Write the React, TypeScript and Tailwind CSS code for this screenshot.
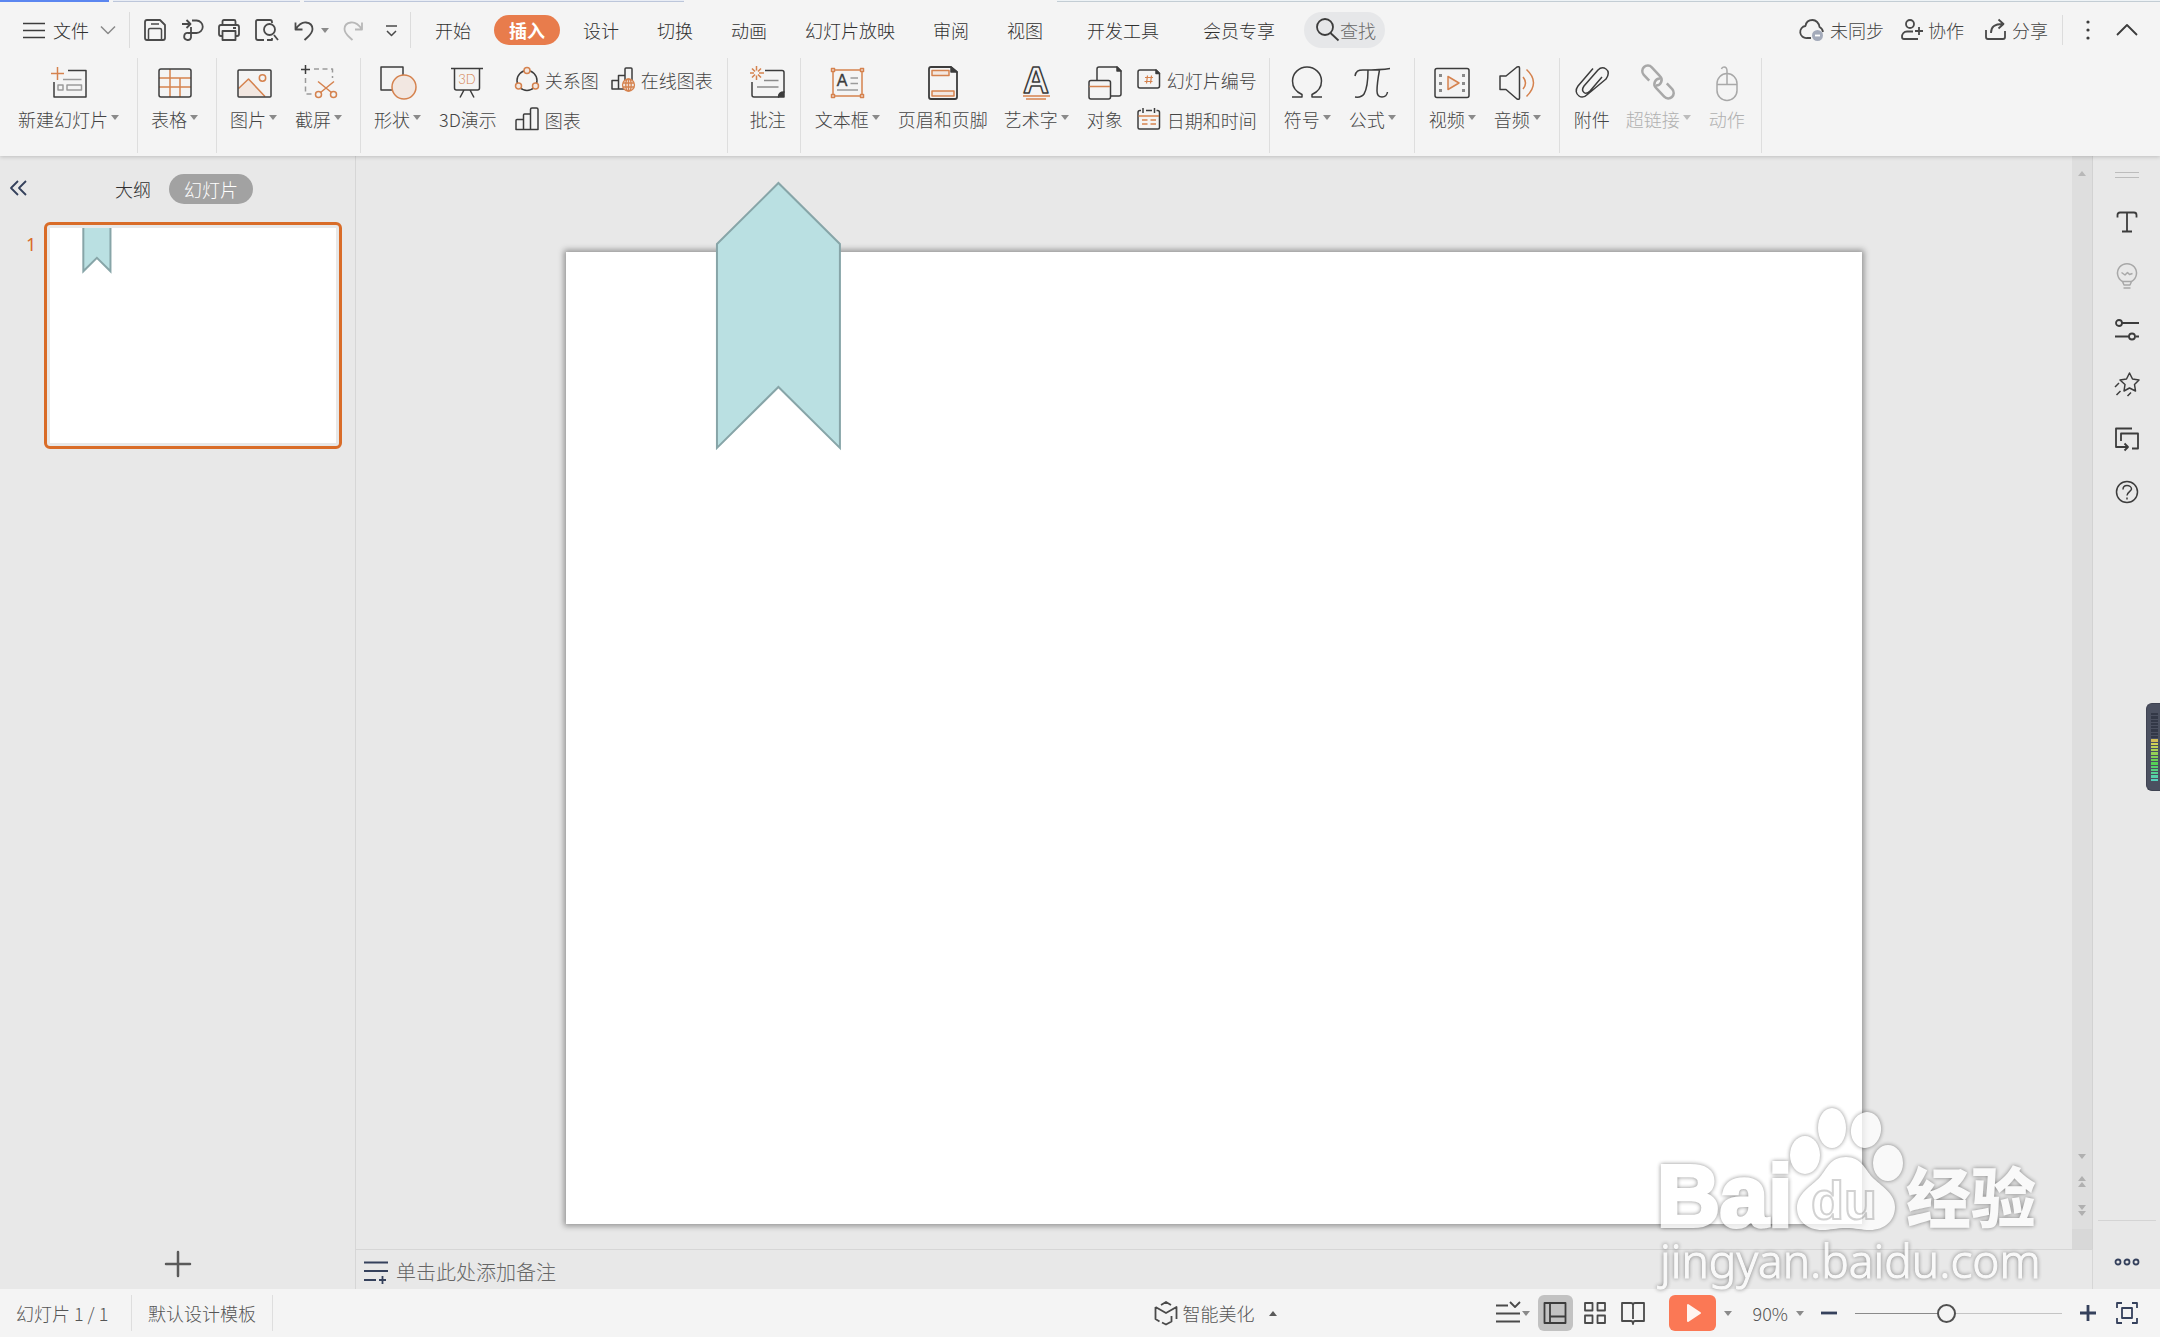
import React, { useState } from 'react';

const INK = '#3c3c3c';
const ORANGE = '#d5824e';
const TINT = '#f2e7e1';
const NAVY = '#35415c';

interface IconProps { children: React.ReactNode; size?: number; stroke?: string; width?: number; }

function Icon({ children, size = 36, stroke = INK, width = 1.5 }: IconProps) {
  return (
    <svg width={size} height={size} viewBox={`0 0 ${size} ${size}`} fill="none" stroke={stroke} strokeWidth={width} strokeLinejoin="round" className="shrink-0 overflow-visible" aria-hidden="true">
      {children}
    </svg>
  );
}

function Caret({ up = false, className = 'text-[#8a8a8a]' }: { up?: boolean; className?: string }) {
  return (
    <svg width="8" height="5" viewBox="0 0 8 5" fill="currentColor" className={`shrink-0 ${className}`} aria-hidden="true">
      <path d={up ? 'M0 5h8L4 0z' : 'M0 0h8L4 5z'} />
    </svg>
  );
}

const icons = {
  newSlide: <Icon><path d="M17 5.5h18V32H3V17" /><path d="M12 14.5h18.500M7 20h5v5H7zM16 20h14.500v5H16z" stroke="#9a9a9a" /><path d="M6.500 2v13M0 8.500h13" stroke={ORANGE} /></Icon>,
  table: <Icon><path d="M2 13h32M2 22h32M13 4v28M23 13v19" stroke={ORANGE} /><rect x="2" y="4" width="32" height="28" rx="2" /></Icon>,
  picture: <Icon><path d="M2.500 23.500l10-9.500L29 31.500H2.500z" fill={TINT} stroke="none" /><path d="M2.500 23.500l10-9.500L29 31.500" stroke={ORANGE} /><circle cx="26.500" cy="13" r="3.200" stroke={ORANGE} /><rect x="2" y="5" width="33" height="27" rx="1" /></Icon>,
  screenshot: <Icon><path d="M13 4h18.500v9M4.500 13v16H14" stroke="#9a9a9a" strokeDasharray="5 3.500" /><path d="M4.500 0v9M0 4.500h9" /><g stroke={ORANGE}><circle cx="17.500" cy="29.500" r="3" /><circle cx="32.500" cy="29.500" r="3" /><path d="M17 16.500l13.500 11M33 16.500l-13.500 11" /></g></Icon>,
  shapes: <Icon><rect x="1" y="2" width="22" height="23" /><circle cx="24" cy="22" r="12" fill={TINT} stroke={ORANGE} /></Icon>,
  threeD: <Icon><path d="M1 3.500h32M4.500 3.500V23q0 2 2 2h21q2 0 2-2V3.500M14 25l-4 7.500M20 25l4 7.500" /><text x="17" y="19" textAnchor="middle" fill={ORANGE} stroke="none" fontSize="13" fontFamily="Lato, sans-serif">3D</text></Icon>,
  comment: <Icon><path d="M15 5.500h17q2 0 2 2V27l-5.500 5H4q-2 0-2-2V17" /><path d="M34 27v5h-5.500q0-5 5.500-5z" fill={INK} /><path d="M14 15.500h14.500M7 22h21.500" stroke="#8a8a8a" /><path d="M6.500 1v4.500M6.500 10.500V15M0 8h4M9 8h5M2 3.500l3 3M11 3.500l-3 3M2 12.500l3-3M11 12.500l-3-3" stroke={ORANGE} /></Icon>,
  textBox: <Icon stroke={ORANGE}><rect x="4" y="5" width="29" height="26" /><path d="M2.500 3.500h3v3h-3zM31.500 3.500h3v3h-3zM2.500 29.500h3v3h-3zM31.500 29.500h3v3h-3z" fill={TINT} /><path d="M21.500 13H29M21.500 18.500H29M8 25h21" stroke="#9a9a9a" /><text x="13" y="21" textAnchor="middle" fill={INK} stroke={INK} strokeWidth="0.400" fontSize="16" fontFamily="Liberation Sans, sans-serif">A</text></Icon>,
  headerFooter: <Icon><path d="M26 2H6Q4 2 4 4v28q0 2 2 2h24q2 0 2-2V7z" strokeWidth="1.800" /><path d="M26 2v5h6z" fill={INK} /><path d="M7 5.500h17v5H7zM7 26h22v5H7z" fill={TINT} stroke={ORANGE} /></Icon>,
  wordArt: <Icon><text x="18" y="27.500" textAnchor="middle" fontSize="36" fontWeight="700" fontFamily="Liberation Sans, sans-serif">A</text><path d="M5 31h27M8 34h20" stroke={ORANGE} /></Icon>,
  object: <Icon><path d="M30 2H12q-2 0-2 2v27h22q2 0 2-2V6z" /><path d="M30 2v4h4z" fill={INK} /><rect x="2" y="15.500" width="21.500" height="18.500" rx="2" fill="#f4f4f4" /><path d="M2.500 21.500h20.500" stroke={ORANGE} /></Icon>,
  omega: <Icon><path d="M3 32h10v-2.500C7.500 27 3.500 22 3.500 16a14.500 14 0 0 1 29 0c0 6-4 11-9.500 13.500V32h10" /></Icon>,
  pi: <Icon><path d="M1 11C2 6 4 5 9 5c9 0 18 0 27-1.500M14 5c0 10-1 19-4 24-2 3-5 3.500-9 3M25.500 5C24 13 23 19 23 26c0 4 1.500 6 5 6 3.500 0 5-2 5.500-5" /></Icon>,
  video: <Icon><rect x="1" y="3.500" width="34" height="29" rx="2" /><path d="M6.500 9v3M6.500 17v3M6.500 24v3M29.500 9v3M29.500 17v3M29.500 24v3" stroke="#8a8a8a" strokeWidth="3" /><path d="M14 11.500v13l11-6.500z" fill={TINT} stroke={ORANGE} /></Icon>,
  audio: <Icon><path d="M1 11h6L18 2q2.500-1 2.500 1v30q0 2-2.500 1L7 24.500H1z" /><path d="M24 12q5 6 0 12M27.500 4.500q14 13 0 27" stroke={ORANGE} /></Icon>,
  attach: <Icon><path d="M19 3.500L4 21c-3 4-2 8 1 10s6 1 9-2L32 14c3-4 3-8 0-10s-6-1-8 1L10 21c-2 3-2 5 0 6.500s4 .5 6-1.500l12-14" /></Icon>,
  link: <Icon stroke="#a8a8a8" width={2.500}><g transform="translate(18 17) rotate(47)"><path d="M-7 5.500H-15a5.500 5.500 0 0 1 0-11H-3a5.500 5.500 0 0 1 4 9.500" /><path d="M7-5.500H15a5.500 5.500 0 0 1 0 11H3a5.500 5.500 0 0 1-4-9.500" /></g></Icon>,
  mouse: <Icon stroke="#a8a8a8"><rect x="8" y="8.500" width="20" height="27" rx="10" /><path d="M8 19.500h20M18 19.500V6q0-4-3-4-2 0-2.500 2" /></Icon>,
  relation: <Icon size={24}><circle cx="12" cy="12.500" r="10" /><g fill={TINT} stroke={ORANGE}><circle cx="12" cy="2.500" r="3" /><circle cx="3.500" cy="18" r="3" /><circle cx="20.500" cy="18" r="3" /></g></Icon>,
  chart: <Icon size={24}><path d="M1 21.500v-9q0-1 1-1h6.500v10zM8.500 21.500V7q0-1 1-1h6v15.500zM15.500 21.500V1.500q0-1.500 1.500-1.500h4.500Q23 0 23 1.500v20z" /></Icon>,
  onlineChart: <Icon size={24}><path d="M1 21v-8.500h6.500V21zM7.500 21V7.500H14V21zM14 12V1q0-1 1-1h5q1 0 1 1v12" /><g stroke={ORANGE} strokeWidth="1.300"><circle cx="17.500" cy="17" r="6" fill={TINT} /><ellipse cx="17.500" cy="17" rx="2.700" ry="6" /><path d="M12 15h11M12 19h11M17.500 11v12" /></g></Icon>,
  slideNumber: <Icon size={24}><path d="M19 2H3Q1 2 1 4v14q0 2 2 2h17.500q2 0 2-2V5.500z" /><path d="M19 2v3.500h3.500z" fill={INK} /><path d="M8 9.500h8M7.500 13.500h8M10.500 7.500l-1 8M14.500 7.500l-1 8" stroke={ORANGE} strokeWidth="1.200" /></Icon>,
  dateTime: <Icon size={24}><path d="M4 2.500H3Q1 2.500 1 4.500v15q0 1.500 1.500 1.500h18.500q1.500 0 1.500-1.500v-15q0-2-2-2h-1M9 2.500h6M6 0v5M17.500 0v5" /><path d="M1.500 8H22M5 12h5.500M13.500 12H19M5 16h5.500M13.500 16H19" stroke={ORANGE} /></Icon>,
};

type IconName = keyof typeof icons;

function RibbonGroup({ children, className = 'pl-[5px] pr-2' }: { children: React.ReactNode; className?: string }) {
  return <div className={`flex h-[95px] items-start border-r border-[#dedede] ${className}`}>{children}</div>;
}

function RibbonButton({ icon, label, menu, disabled }: { icon: IconName; label: string; menu?: boolean; disabled?: boolean }) {
  return (
    <button disabled={disabled} className={`flex shrink-0 flex-col items-center gap-[7px] pt-[7px] pl-2 ${menu ? 'pr-[10px]' : 'pr-2'} ${disabled ? 'text-[#b0b0b0]' : 'text-[#444]'}`}>
      {icons[icon]}
      <span className="flex items-center gap-[3px] whitespace-nowrap leading-[22px]">
        {label}
        {menu && <Caret className={disabled ? 'mb-1 text-[#bcbcbc]' : 'mb-1 text-[#8a8a8a]'} />}
      </span>
    </button>
  );
}

function SmallButton({ icon, label }: { icon: IconName; label: string }) {
  return (
    <button className="flex h-10 items-center gap-[6px] whitespace-nowrap text-[#444]">
      {icons[icon]}
      {label}
    </button>
  );
}

const TABS = ['开始', '插入', '设计', '切换', '动画', '幻灯片放映', '审阅', '视图', '开发工具', '会员专享'];

function TabRow() {
  const [active, setActive] = useState('插入');
  return (
    <div className="flex h-14 items-center justify-between text-[#303030]">
      <div className="flex items-center">
        <button className="flex items-center pl-[23px] pr-[14px]">
          <Icon size={22}><path d="M0 4.500h22M0 11.500h22M0 18.500h22" /></Icon>
          <span className="ml-2 whitespace-nowrap">文件</span>
          <span className="ml-3"><Icon size={14} stroke="#8a8a8a"><path d="M0 3.500l7 7 7-7" /></Icon></span>
        </button>
        <div className="flex h-9 items-center gap-[13px] border-x border-[#dcdcdc] pl-[13px] pr-[9px]">
          <button aria-label="保存">
            <Icon size={24} width={1.800} stroke="#4a4a4a"><path d="M4 2h13l5 5v13q0 2-2 2H4q-2 0-2-2V4q0-2 2-2z" /><path d="M8 6h8M5.500 22V12q0-1.500 1.500-1.500h10q1.500 0 1.500 1.500v10" strokeWidth="1.500" /></Icon>
          </button>
          <button aria-label="输出为PDF">
            <Icon size={24} stroke="#4a4a4a" width={1.800}><path d="M2 6h8M6.500 2l4 4-4 4M12 2.500h4.500a6 6 0 0 1 0 12.500H8a3.500 3.500 0 1 0 3 4.500V9" /></Icon>
          </button>
          <button aria-label="打印">
            <Icon size={24} stroke="#4a4a4a" width={1.800}><path d="M5.500 7V3.500Q5.500 2 7 2h10q1.500 0 1.500 1.500V7M5.500 18H4q-2 0-2-2V9q0-2 2-2h16q2 0 2 2v7q0 2-2 2h-1.500M5.500 13h13v9h-13zM16 10h3" /></Icon>
          </button>
          <button aria-label="打印预览">
            <Icon size={24} stroke="#4a4a4a" width={1.800}><path d="M10 22H4q-2 0-2-2V3.500Q2 2 3.500 2H16q2 0 2 2v1M18 20v2h-5M20 17l4 5" /><circle cx="15.500" cy="11.500" r="5.500" /></Icon>
          </button>
          <button aria-label="撤消" className="flex items-center gap-[6px]">
            <Icon size={24} stroke="#4a4a4a" width={1.800}><path d="M4.500 4.500v7h7M4.500 11.500C7.500 7 11 4 15 4.500c4 .5 6.500 3 6.500 6.500 0 5-4 7-8 11" /></Icon>
            <Caret />
          </button>
          <button aria-label="恢复" disabled>
            <Icon size={24} stroke="#b8b8b8" width={1.800}><path d="M20 4.500v7h-7M20 11.500C17 7 13 4 9 4.500 5 5 2.500 7.500 2.500 11c0 5 4 7 8 11" /></Icon>
          </button>
          <button aria-label="自定义快速访问工具栏" className="ml-[2px]">
            <Icon size={20} stroke="#4a4a4a"><path d="M5 6h11M6 11l4.500 4.500L15 11" /></Icon>
          </button>
        </div>
        <nav className="ml-[9px] flex items-center gap-2">
          {TABS.map((tab, i) => (
            <button key={tab} onClick={() => setActive(tab)} className={`h-[30px] whitespace-nowrap rounded-full px-[15px] ${i >= 8 ? 'ml-[6px]' : ''} ${tab === active ? 'bg-[#e87c4c] font-bold text-white' : ''}`}>{tab}</button>
          ))}
        </nav>
        <button className="ml-[14px] flex h-9 items-center whitespace-nowrap rounded-full bg-[#e6e7e9] pl-3 pr-[9px] text-[#6a6a6a]">
          <Icon size={24} width={1.800}><circle cx="9" cy="9" r="8" /><path d="M14.500 15l8 7.500" /></Icon>
          查找
        </button>
      </div>
      <div className="flex items-center pr-[22px] text-[#444]">
        <button className="flex items-center gap-[5px] whitespace-nowrap">
          <Icon size={26} width={1.800} stroke="#4a4a4a"><path d="M12 21H8a6 6 0 0 1-1.500-12C7 5 10 3 13.500 3S20 6 20.500 10q3 1.500 3.500 5" /><circle cx="18.500" cy="18.500" r="5.500" fill="#a3aaba" stroke="none" /><path d="M16 18.500h5" stroke="#fff" /></Icon>
          未同步
        </button>
        <button className="ml-4 flex items-center gap-1 whitespace-nowrap">
          <Icon size={24} stroke="#4a4a4a" width={1.800}><circle cx="10" cy="6" r="4" /><path d="M18 21H4q-2 0-2-2c0-3 2-5.500 5-5.500h6M19 9v8M15 13h8" /></Icon>
          协作
        </button>
        <button className="ml-5 flex items-center gap-1 whitespace-nowrap">
          <Icon size={24} stroke="#4a4a4a" width={1.800}><path d="M2 12v7q0 2 2 2h15q2 0 2-2v-6M7 15c0-6 3-9 12-9M14.500 1.500l5 4.500-5 4.500" /></Icon>
          分享
        </button>
        <div className="ml-[14px] h-[30px] border-l border-[#dcdcdc]" />
        <button aria-label="更多" className="ml-[15px]">
          <Icon size={20} stroke="none"><g fill={INK}><circle cx="10" cy="2" r="1.600" /><circle cx="10" cy="10" r="1.600" /><circle cx="10" cy="18" r="1.600" /></g></Icon>
        </button>
        <button aria-label="隐藏功能区" className="ml-[18px]">
          <Icon size={22} width={1.800}><path d="M1 16l10-10 10 10" /></Icon>
        </button>
      </div>
    </div>
  );
}

function Ribbon() {
  return (
    <div className="flex h-[98px] items-start">
      <RibbonGroup className="pl-[10px] pr-2"><RibbonButton icon="newSlide" label="新建幻灯片" menu /></RibbonGroup>
      <RibbonGroup><RibbonButton icon="table" label="表格" menu /></RibbonGroup>
      <RibbonGroup>
        <RibbonButton icon="picture" label="图片" menu />
        <RibbonButton icon="screenshot" label="截屏" menu />
      </RibbonGroup>
      <RibbonGroup>
        <RibbonButton icon="shapes" label="形状" menu />
        <RibbonButton icon="threeD" label="3D演示" />
        <div className="flex flex-col pl-[10px] pr-[6px] pt-[2px]">
          <div className="flex gap-3">
            <SmallButton icon="relation" label="关系图" />
            <SmallButton icon="onlineChart" label="在线图表" />
          </div>
          <SmallButton icon="chart" label="图表" />
        </div>
      </RibbonGroup>
      <RibbonGroup className="pl-[14px] pr-[6px]"><RibbonButton icon="comment" label="批注" /></RibbonGroup>
      <RibbonGroup className="pl-[6px] pr-1">
        <RibbonButton icon="textBox" label="文本框" menu />
        <RibbonButton icon="headerFooter" label="页眉和页脚" />
        <RibbonButton icon="wordArt" label="艺术字" menu />
        <RibbonButton icon="object" label="对象" />
        <div className="flex flex-col pl-[6px] pr-2 pt-[2px]">
          <SmallButton icon="slideNumber" label="幻灯片编号" />
          <SmallButton icon="dateTime" label="日期和时间" />
        </div>
      </RibbonGroup>
      <RibbonGroup className="pl-[6px] pr-2">
        <RibbonButton icon="omega" label="符号" menu />
        <RibbonButton icon="pi" label="公式" menu />
      </RibbonGroup>
      <RibbonGroup className="pl-[6px] pr-2">
        <RibbonButton icon="video" label="视频" menu />
        <RibbonButton icon="audio" label="音频" menu />
      </RibbonGroup>
      <RibbonGroup className="pl-[6px] pr-2">
        <RibbonButton icon="attach" label="附件" />
        <RibbonButton icon="link" label="超链接" menu disabled />
        <RibbonButton icon="mouse" label="动作" disabled />
      </RibbonGroup>
    </div>
  );
}

// Slide content in slide units, shared by the canvas and the thumbnail
function SlideContent({ className, stroke }: { className: string; stroke: number }) {
  return (
    <svg viewBox="0 0 1296 972" className={`block h-full w-full ${className}`} aria-hidden="true">
      <path d="M151-8L212.500-69 274-8V196L212.500 135 151 196z" fill="#bae0e2" stroke="#87a5a8" strokeWidth={stroke} vectorEffect="non-scaling-stroke" />
    </svg>
  );
}

function SlidePanel() {
  return (
    <aside className="flex w-[356px] shrink-0 flex-col border-r border-[#d6d6d6]">
      <div className="flex items-center pt-[18px]">
        <button aria-label="收起" className="ml-[10px]">
          <Icon size={18} stroke={NAVY} width={1.800}><path d="M8 1L1 8l7 7M16 1L9 8l7 7" /></Icon>
        </button>
        <button className="ml-[87px] text-[#303030]">大纲</button>
        <button className="ml-[18px] h-[30px] rounded-full bg-[#a2a2a2] px-[15px] text-white">幻灯片</button>
      </div>
      <div className="mt-[18px] flex flex-1 items-start pr-[13px]">
        <span className="w-11 pl-[26px] pt-[10px] text-[18px] font-normal text-[#d96c28]" style={{ fontFamily: '"Noto Sans", sans-serif' }}>1</span>
        <button aria-label="幻灯片 1" className="flex-1 rounded-md border-[3px] border-[#d96c28] p-[3px]">
          <div className="aspect-[4/3] bg-white"><SlideContent className="overflow-hidden" stroke={2} /></div>
        </button>
      </div>
      <button aria-label="新建幻灯片" className="mb-3 self-center">
        <Icon size={26} stroke="#5a5a5a" width={2.500}><path d="M13 1v24M1 13h24" strokeLinecap="round" /></Icon>
      </button>
    </aside>
  );
}

function ScrollBar() {
  return (
    <div className="flex w-[21px] flex-col items-center border-r border-[#d2d2d2] bg-[#dedede] pt-[15px]">
      <Caret up className="text-[#b8b8b8]" />
      <div className="flex-1" />
      <Caret className="text-[#b0b0b0]" />
      <div className="mt-[17px] flex flex-col gap-[1px]"><Caret up className="text-[#b0b0b0]" /><Caret up className="text-[#b0b0b0]" /></div>
      <div className="mt-[18px] flex flex-col gap-[1px]"><Caret className="text-[#b0b0b0]" /><Caret className="text-[#b0b0b0]" /></div>
      <div className="mt-[13px] h-5 w-full bg-[#d8d8d8]" />
    </div>
  );
}

const RAIL = [
  { label: '文本', icon: <Icon size={24} width={1.800}><path d="M2.500 7.500V5q0-2.500 2.500-2.500h14q2.500 0 2.500 2.500v2.500M12 2.500v19M7 21.500h10" /></Icon> },
  { label: '智能特性', icon: <Icon size={26} stroke="#a8a8a8"><path d="M8.500 18.500a9.500 9.500 0 1 1 9 0zM8.500 18.500l1.500 3.500h6l1.500-3.500M9.500 25h7M7.500 9.500l3.500 2.500 2.500-2.500 2 2 3-1" /></Icon> },
  { label: '属性', icon: <Icon size={24} width={1.800}><path d="M7 5h17M0 18.500h14M20.500 18.500H24" /><circle cx="4" cy="5" r="3" /><circle cx="17" cy="18.500" r="3" /></Icon> },
  { label: '动画', icon: <Icon size={24}><path d="M14.500 1l3 6 6.500 1-4.500 4.500 1 6.500-6-3-5.500 3 1-6.500L5 8l6.500-1zM4 11l-4 4M5.500 19l-4 4M16 20.500l-3.500 3.500" /></Icon> },
  { label: '切换', icon: <Icon size={24} width={1.800}><path d="M17 2.500H1V21h12M9.500 17.500l3.500 3.500-3.500 3.500M6 15V7.500h17V22.500h-6" /></Icon> },
  { label: '帮助', icon: <Icon size={24}><circle cx="12" cy="12" r="10.500" /><path d="M8 9.500C8 7 9.500 5.500 12 5.500S16.500 7 16.500 9 12 12 12 15.500M12 17.500v2" /></Icon> },
];

function TaskRail() {
  return (
    <aside className="flex w-[67px] shrink-0 flex-col items-center">
      <div className="mt-4 h-[6px] w-6 border-y border-[#bcbcbc]" />
      <div className="mt-[17px] flex flex-1 flex-col items-center">
        {RAIL.map(item => <button key={item.label} aria-label={item.label} className="flex h-[54px] w-10 items-center justify-center">{item.icon}</button>)}
      </div>
      <div className="h-px w-[58px] bg-[#d4d4d4]" />
      <button aria-label="更多任务窗格" className="flex h-[68px] items-start pt-[37px]">
        <Icon size={26} stroke={NAVY} width={1.800}><circle cx="4" cy="4" r="2.500" /><circle cx="13" cy="4" r="2.500" /><circle cx="22" cy="4" r="2.500" /></Icon>
      </button>
    </aside>
  );
}

function StatusBar() {
  const [zoom, setZoom] = useState(90);
  return (
    <footer className="flex h-12 items-center justify-between bg-[#f4f4f4] text-[#555]">
      <div className="flex items-center">
        <span className="flex h-9 w-[132px] items-center whitespace-pre border-r border-[#dedede] pl-4">幻灯片 1 / 1</span>
        <button className="h-9 whitespace-nowrap border-r border-[#dedede] px-4">默认设计模板</button>
      </div>
      <div className="flex items-center pr-[22px]">
        <button className="mr-[219px] flex items-center gap-[5px] whitespace-nowrap">
          <Icon size={24} stroke="#4a4a4a" width={1.800}><path d="M7 4l5-3 5 3M1.500 6v12l4 2.500M1.500 6L12 12l10.500-6v12M8 21.500l4 2 5.500-3V15" /></Icon>
          智能美化
          <Caret up className="ml-[9px] text-[#5a5a5a]" />
        </button>
        <button aria-label="备注显示" className="flex items-center gap-[2px]">
          <Icon size={24} stroke="#4a4a4a" width={1.800}><path d="M0 4.500h12M14 1l5 5 5-5M0 12.500h24M0 20.500h24" /></Icon>
          <Caret />
        </button>
        <button aria-label="普通视图" className="ml-2 flex h-9 w-[35px] items-center justify-center rounded-md bg-[#c2c2c2]">
          <Icon size={24} width={1.800}><path d="M1.500 2h21v20h-21zM7 2v20M7 15.500h15.500" /></Icon>
        </button>
        <button aria-label="幻灯片浏览" className="ml-[10px]">
          <Icon size={24} stroke="#4a4a4a" width={1.800}><path d="M2 2h7.500v7.500H2zM14.500 2H22v7.500h-7.500zM2 14.500h7.500V22H2zM14.500 14.500H22V22h-7.500z" /></Icon>
        </button>
        <button aria-label="阅读视图" className="ml-[14px]">
          <Icon size={24} stroke="#4a4a4a" width={1.800}><path d="M12 4q0-2-2-2H1v18h9q2 0 2 3 0-3 2-3h9V2h-9q-2 0-2 2zM12 4v14" /></Icon>
        </button>
        <button aria-label="播放" className="ml-6 flex h-9 w-[47px] items-center justify-center rounded-md bg-[#fb7855]">
          <svg width="16" height="20" viewBox="0 0 16 20" className="ml-1" aria-hidden="true"><path d="M2 2v16l12-8z" fill="#fff5f0" stroke="#fff5f0" strokeWidth="2" strokeLinejoin="round" /></svg>
        </button>
        <span className="ml-2"><Caret /></span>
        <button className="ml-[21px] flex items-center gap-2">{zoom}%<Caret /></button>
        <button aria-label="缩小" className="ml-[17px]" onClick={() => setZoom(z => Math.max(10, z - 10))}>
          <Icon size={16} stroke={NAVY} width={2.800}><path d="M0 8h16" /></Icon>
        </button>
        <input
          type="range" min={10} max={194} value={zoom} aria-label="显示比例"
          onChange={e => setZoom(Number(e.target.value))}
          className="mx-[18px] h-5 w-[207px] appearance-none bg-[linear-gradient(90deg,#8a8a8a_43%,#c4c4c4_43%)] bg-[length:100%_1px] bg-center bg-no-repeat [&::-webkit-slider-thumb]:h-[19px] [&::-webkit-slider-thumb]:w-[19px] [&::-webkit-slider-thumb]:appearance-none [&::-webkit-slider-thumb]:rounded-full [&::-webkit-slider-thumb]:border-2 [&::-webkit-slider-thumb]:border-[#505050] [&::-webkit-slider-thumb]:bg-[#f4f4f4]"
        />
        <button aria-label="放大" onClick={() => setZoom(z => Math.min(190, z + 10))}>
          <Icon size={16} stroke={NAVY} width={2.800}><path d="M0 8h16M8 0v16" /></Icon>
        </button>
        <button aria-label="最佳显示比例" className="ml-5">
          <Icon size={22} stroke={NAVY} width={1.800}><path d="M1 6V1h5M16 1h5v5M21 16v5h-5M6 21H1v-5M6 6h10v10H6z" /></Icon>
        </button>
      </div>
    </footer>
  );
}

function LevelMeter() {
  return (
    <div className="absolute right-0 top-[703px] flex h-[88px] w-[14px] flex-col gap-[1px] rounded-l-md border border-r-0 border-[#3f4352] bg-[#4b5060] py-[9px] pl-1 pr-[2px]">
      {Array.from({ length: 21 }, (_, i) => (
        <div key={i} className="flex-1" style={{ background: i < 8 ? '#333847' : `hsl(${50 + (i - 8) * 10} 58% 58%)` }} />
      ))}
    </div>
  );
}

function Watermark() {
  return (
    <svg width="400" height="190" viewBox="1650 1100 400 190" fill="#fff" className="pointer-events-none absolute bottom-[46px] right-[110px] opacity-75 drop-shadow-[0_0_2px_rgba(0,0,0,0.6)]">
      <text x="1657" y="1225" fontSize="87" fontWeight="700" fontFamily="Liberation Sans, sans-serif" stroke="#fff" strokeWidth="4">Bai</text>
      <ellipse cx="1805" cy="1154" rx="15" ry="19" />
      <ellipse cx="1832" cy="1127" rx="14" ry="20" />
      <ellipse cx="1866" cy="1129" rx="15" ry="18" transform="rotate(10 1866 1129)" />
      <ellipse cx="1888" cy="1162" rx="15" ry="18" />
      <path d="M1846 1156c-16 0-19 12-26 20-8 9-23 16-23 31 0 13 11 22 25 22 9 0 14-2 24-2s15 2 24 2c14 0 25-9 25-23 0-14-14-21-23-30-7-8-11-20-26-20z" />
      <text x="1811" y="1218" fontSize="54" fontWeight="700" fontFamily="Liberation Sans, sans-serif" stroke="#c4c4c4" strokeWidth="2">du</text>
      <text x="1906" y="1221" fontSize="65" fontWeight="900" fontFamily="Noto Sans CJK SC, sans-serif">经验</text>
      <text x="1660" y="1277" fontSize="46" fontFamily="Noto Sans, sans-serif" stroke="#fff">jingyan.baidu.com</text>
    </svg>
  );
}

export default function App() {
  return (
    <div className="relative flex min-h-screen flex-col bg-[#e8e8e8] text-[18px] leading-[24px]" style={{ fontFamily: '"Noto Sans CJK SC", sans-serif', fontWeight: 300 }}>
      <header className="z-10 bg-[#f4f4f4] shadow-[0_1px_4px_rgba(0,0,0,0.18)]">
        <div className="flex h-[2px]">
          <div className="w-[109px] bg-[#5b86f0]" />
          <div className="ml-1 w-[187px] border-b border-[#bcc6da] bg-[#e9edf5]" />
          <div className="ml-1 w-[380px] border-b border-[#bcc6da] bg-[#e9edf5]" />
          <div className="ml-[373px] flex-1 border-b border-[#c3cdd4] bg-[#eef3f6]" />
        </div>
        <TabRow />
        <Ribbon />
      </header>
      <div className="flex flex-1">
        <SlidePanel />
        <div className="flex flex-1 flex-col">
          <div className="flex flex-1 border-b border-[#d6d6d6]">
            <div className="flex flex-1 items-start justify-center pb-6 pt-24">
              <div className="aspect-[4/3] w-[75.5%] bg-white shadow-[0_0_6px_2px_rgba(0,0,0,0.38)]"><SlideContent className="overflow-visible" stroke={2} /></div>
            </div>
            <ScrollBar />
          </div>
          <button className="flex h-[39px] items-center gap-2 border-r border-[#d6d6d6] pl-2 pt-1 text-left text-[20px] text-[#666]">
            <Icon size={24} stroke={NAVY} width={1.800}><path d="M0 2.500h24M0 11h24M0 20h12M15 20h7M18.500 16v8" /></Icon>
            单击此处添加备注
          </button>
        </div>
        <TaskRail />
      </div>
      <StatusBar />
      <LevelMeter />
      <Watermark />
    </div>
  );
}
